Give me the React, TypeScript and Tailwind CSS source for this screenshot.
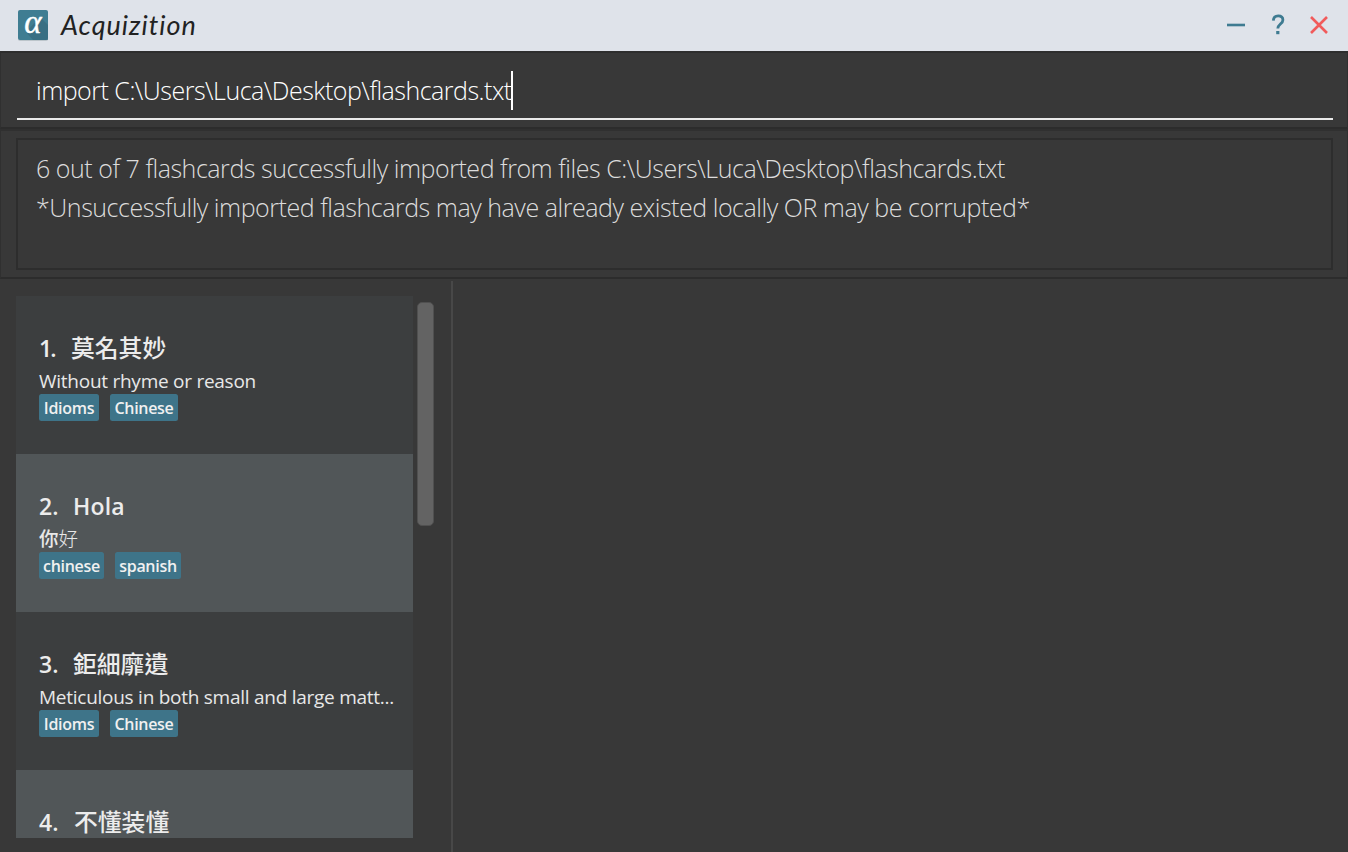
import React from "react";

const cards = [
  { id: "1.", front: "莫名其妙", back: "Without rhyme or reason", tags: ["Idioms", "Chinese"], idClass: "w-[32px] tracking-[-2px]" },
  { id: "2.", front: "Hola", back: "你好", tags: ["chinese", "spanish"], idClass: "w-[34px]" },
  { id: "3.", front: "鉅細靡遺", back: "Meticulous in both small and large matt...", tags: ["Idioms", "Chinese"], idClass: "w-[34px]" },
  { id: "4.", front: "不懂装懂", back: "", tags: [], idClass: "w-[35px]" },
];

const tagWidths: Record<string, string> = {
  Idioms: "w-[60px]",
  Chinese: "w-[68px]",
  chinese: "w-[65px]",
  spanish: "w-[66px]",
};

function Logo() {
  return (
    <svg className="block h-[31px] w-[30px]" viewBox="0 0 30 31">
      <rect x="0" y="1" width="30" height="30" rx="2" fill="#bcc5cb" />
      <rect x="0" y="0" width="30" height="30" rx="2" fill="#3f7d92" />
      <path d="M22 7l8 8v15H15l-7-8z" fill="#35697b" opacity=".65" />
      <text x="14.8" y="23.4" textAnchor="middle" fontSize="33" fill="#fff" stroke="#fff" strokeWidth=".4" className="font-['Liberation_Serif',serif] italic">α</text>
    </svg>
  );
}

export default function App() {
  return (
    <div className="flex h-[852px] w-[1348px] flex-col overflow-hidden bg-[#383838] font-['Open_Sans','Noto_Sans_CJK_SC',sans-serif]">
      <header className="flex h-[51px] shrink-0 items-start bg-[#dfe3ea]">
        <div className="ml-[18px] mt-[10px]"><Logo /></div>
        <h1 className="ml-[13px] mt-[8px] whitespace-nowrap font-['Lato',sans-serif] text-[27px] leading-[34px] tracking-[1px] text-[#222] italic">Acquizition</h1>
        <svg className="ml-auto mr-[18px] mt-[13px] h-[24px] w-[106px]" viewBox="0 0 106 24">
          <path d="M3 12h18" stroke="#3e7b91" strokeWidth="2.6" />
          <path d="M49.3 7.6c.2-3.2 2.3-4.8 4.9-4.8 3.1 0 4.7 1.6 4.7 4.1 0 4-5.1 4.3-5.1 8.6" fill="none" stroke="#3e7b91" strokeWidth="2.8" />
          <path d="M52.2 18h3.2v3.2h-3.2z" fill="#3e7b91" />
          <path d="M87 4l16 16m0-16l-16 16" stroke="#f15b5b" strokeWidth="2.6" />
        </svg>
      </header>

      <section className="flex h-[78px] shrink-0 flex-col border-x border-t-2 border-b-2 border-x-[#303030] border-t-[#2e2e2e] border-b-[#2c2c2c] pl-[16px] pr-[14px]">
        <div className="flex h-[67px] items-start border-b-2 border-b-[#e9e9e9] pl-[19px] pt-[18px]">
          <span className="w-[475px] whitespace-nowrap text-[25px] leading-[39px] font-light tracking-[-0.5px] text-white">import C:\Users\Luca\Desktop\flashcards.txt</span>
          <span className="h-[39px] w-[2px] bg-white" />
        </div>
      </section>

      <section className="h-[150px] shrink-0 border-x border-t-2 border-b-2 border-x-[#303030] border-t-[#303030] border-b-[#2c2c2c] pl-[15px] pr-[14px] pt-[7px]">
        <div className="flex h-[132px] flex-col items-start border-2 border-[#2d2d2d] pl-[18px] pt-[9px] text-[25px] leading-[39px] font-light whitespace-nowrap text-[#dcdcdc]">
          <span className="tracking-[-0.46px]">6 out of 7 flashcards successfully imported from files C:\Users\Luca\Desktop\flashcards.txt</span>
          <span className="tracking-[-0.46px]">*Unsuccessfully imported flashcards may have already existed locally OR may be corrupted*</span>
        </div>
      </section>

      <main className="flex min-h-0 flex-1 pl-[16px] pt-[2px]">
        <div className="mt-[15px] h-[542px] w-[397px] overflow-hidden">
          {cards.map((card, i) => (
            <article key={card.id} className={"flex h-[158px] flex-col items-start pl-[23px] pt-[37px] " + (i % 2 ? "bg-[#515658]" : "bg-[#3c3e3f]")}>
              <div className="flex h-[32px] text-[23px] leading-[30px] font-semibold whitespace-nowrap text-[#ececec]">
                <span className={card.idClass}>{card.id}</span>
                <span className={card.front === "Hola" ? "tracking-[0.2px]" : "font-['Noto_Sans_CJK_TC',sans-serif] text-[23.8px] leading-[28px] font-medium"}>{card.front}</span>
              </div>
              <div className="h-[29px] text-[19px] leading-[32px] tracking-[-0.26px] whitespace-nowrap text-[#e8e8e8]">
                {card.back === "你好" ? <span className="text-[19.5px] tracking-normal"><span className="font-medium">你</span><span className="font-light">好</span></span> : card.back}
              </div>
              <div className="flex gap-[11px]">
                {card.tags.map((tag) => (
                  <span key={tag} className={"flex h-[27px] items-center justify-center rounded-[2.5px] bg-[#3e7489] pt-[2px] text-[16px] leading-[25px] font-semibold tracking-[-0.3px] text-[#f0f0f0] " + tagWidths[tag]}>{tag}</span>
                ))}
              </div>
            </article>
          ))}
        </div>
        <div className="ml-[4px] mt-[21px] h-[224px] w-[17px] rounded-[5px] border border-[#505050] bg-[#636363]" />
        <div className="ml-[17px] w-[2px] bg-[#484848]" />
        <div className="flex-1" />
      </main>
    </div>
  );
}
